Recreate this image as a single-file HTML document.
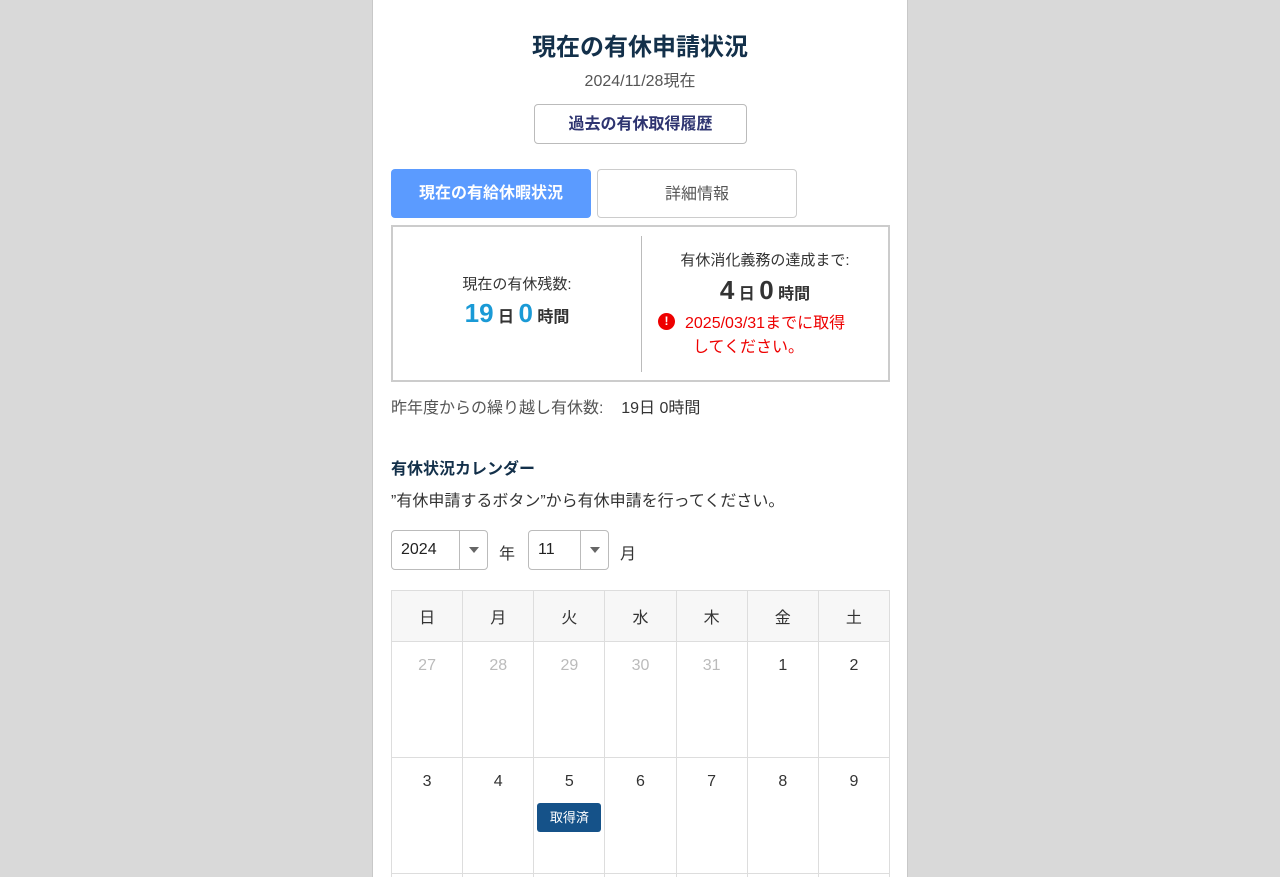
<!DOCTYPE html>
<html style="width:1280px;height:877px;overflow:hidden"><head><meta charset="utf-8"><style>
*{box-sizing:border-box;margin:0;padding:0}
body{width:1280px;height:877px;background:#d9d9d9;font-family:"Liberation Sans","Noto Sans CJK JP",sans-serif;overflow:hidden;position:relative}
.panel{position:absolute;left:372px;top:0;width:536px;height:877px;background:#fff;border-left:1px solid #c8c8c8;border-right:1px solid #c8c8c8}
.a{position:absolute}
.c{text-align:center}
.cal{position:absolute;left:391px;top:590px;width:499px;height:287px;overflow:hidden}
table{border-collapse:collapse;width:499px;table-layout:fixed}
td,th{border:1px solid #ddd;text-align:center;vertical-align:top;font-size:16px;color:#333}
th{height:51px;background:#f7f7f7;font-weight:normal;vertical-align:middle}
td{height:116px;padding-top:15px}
.g{color:#bbb}
.sel{position:absolute;top:530px;height:40px;border:1px solid #bbb;border-radius:4px;font-size:16px;color:#222}
</style></head><body>
<div class="panel"></div>
<div class="a c" style="left:372px;width:536px;top:27px;font-size:24px;font-weight:bold;color:#13304a">現在の有休申請状況</div>
<div class="a c" style="left:372px;width:536px;top:67px;font-size:16px;color:#555">2024/11/28現在</div>
<div class="a c" style="left:534px;top:104px;width:213px;height:40px;border:1px solid #bbb;border-radius:4px;line-height:40px;font-size:16px;font-weight:bold;color:#2e3470">過去の有休取得履歴</div>
<div class="a c" style="left:391px;top:169px;width:200px;height:49px;background:#5b9bff;border-radius:4px;line-height:49px;color:#fff;font-weight:bold;font-size:16px">現在の有給休暇状況</div>
<div class="a c" style="left:597px;top:169px;width:200px;height:49px;border:1px solid #ccc;border-radius:4px;line-height:49px;color:#555;font-size:16px">詳細情報</div>
<div class="a" style="left:391px;top:225px;width:499px;height:157px;border:2px solid #ccc"></div>
<div class="a" style="left:641px;top:236px;width:1px;height:136px;background:#bbb"></div>
<div class="a c" style="left:393px;width:248px;top:273px;font-size:15px;color:#333">現在の有休残数:</div>
<div class="a c" style="left:393px;width:248px;top:298px;font-weight:bold;color:#333;font-size:16px"><span style="color:#1a9ad6;font-size:26px">19</span> 日 <span style="color:#1a9ad6;font-size:26px">0</span> 時間</div>
<div class="a c" style="left:642px;width:246px;top:249px;font-size:15px;color:#333">有休消化義務の達成まで:</div>
<div class="a c" style="left:642px;width:246px;top:275px;font-weight:bold;color:#333;font-size:16px"><span style="font-size:26px">4</span> 日 <span style="font-size:26px">0</span> 時間</div>
<div class="a" style="left:658px;top:313px;width:17px;height:17px;border-radius:50%;background:#e00;color:#fff;font-size:12px;font-weight:bold;text-align:center;line-height:17px">!</div>
<div class="a" style="left:685px;top:312px;font-size:16px;color:#e00;line-height:24px">2025/03/31までに取得</div>
<div class="a" style="left:693px;top:336px;font-size:16px;color:#e00;line-height:24px">してください。</div>
<div class="a" style="left:391px;top:394px;font-size:16px;color:#555">昨年度からの繰り越し有休数: &nbsp;&nbsp;&nbsp;<span style="color:#333">19日 0時間</span></div>
<div class="a" style="left:391px;top:455px;font-size:16px;font-weight:bold;color:#13304a">有休状況カレンダー</div>
<div class="a" style="left:391px;top:487px;font-size:16px;color:#333">”有休申請するボタン”から有休申請を行ってください。</div>
<div class="sel" style="left:391px;width:97px"><span class="a" style="left:9px;top:10px">2024</span><span class="a" style="left:67px;top:0;height:38px;border-left:1px solid #bbb;width:29px"></span><span class="a" style="left:77px;top:16px;border:5px solid transparent;border-top:6px solid #666"></span></div>
<div class="a" style="left:499px;top:540px;font-size:16px;color:#333">年</div>
<div class="sel" style="left:528px;width:81px"><span class="a" style="left:9px;top:10px">11</span><span class="a" style="left:51px;top:0;height:38px;border-left:1px solid #bbb;width:29px"></span><span class="a" style="left:61px;top:16px;border:5px solid transparent;border-top:6px solid #666"></span></div>
<div class="a" style="left:620px;top:540px;font-size:16px;color:#333">月</div>
<div class="cal"><table>
<tr><th>日</th><th>月</th><th>火</th><th>水</th><th>木</th><th>金</th><th>土</th></tr>
<tr><td class="g">27</td><td class="g">28</td><td class="g">29</td><td class="g">30</td><td class="g">31</td><td>1</td><td>2</td></tr>
<tr><td>3</td><td>4</td><td>5<div style="margin:12px auto 0;width:64px;height:29px;background:#155289;border-radius:3px;color:#fff;font-size:13px;line-height:29px">取得済</div></td><td>6</td><td>7</td><td>8</td><td>9</td></tr>
<tr><td></td><td></td><td></td><td></td><td></td><td></td><td></td></tr>
</table></div>
</body></html>
